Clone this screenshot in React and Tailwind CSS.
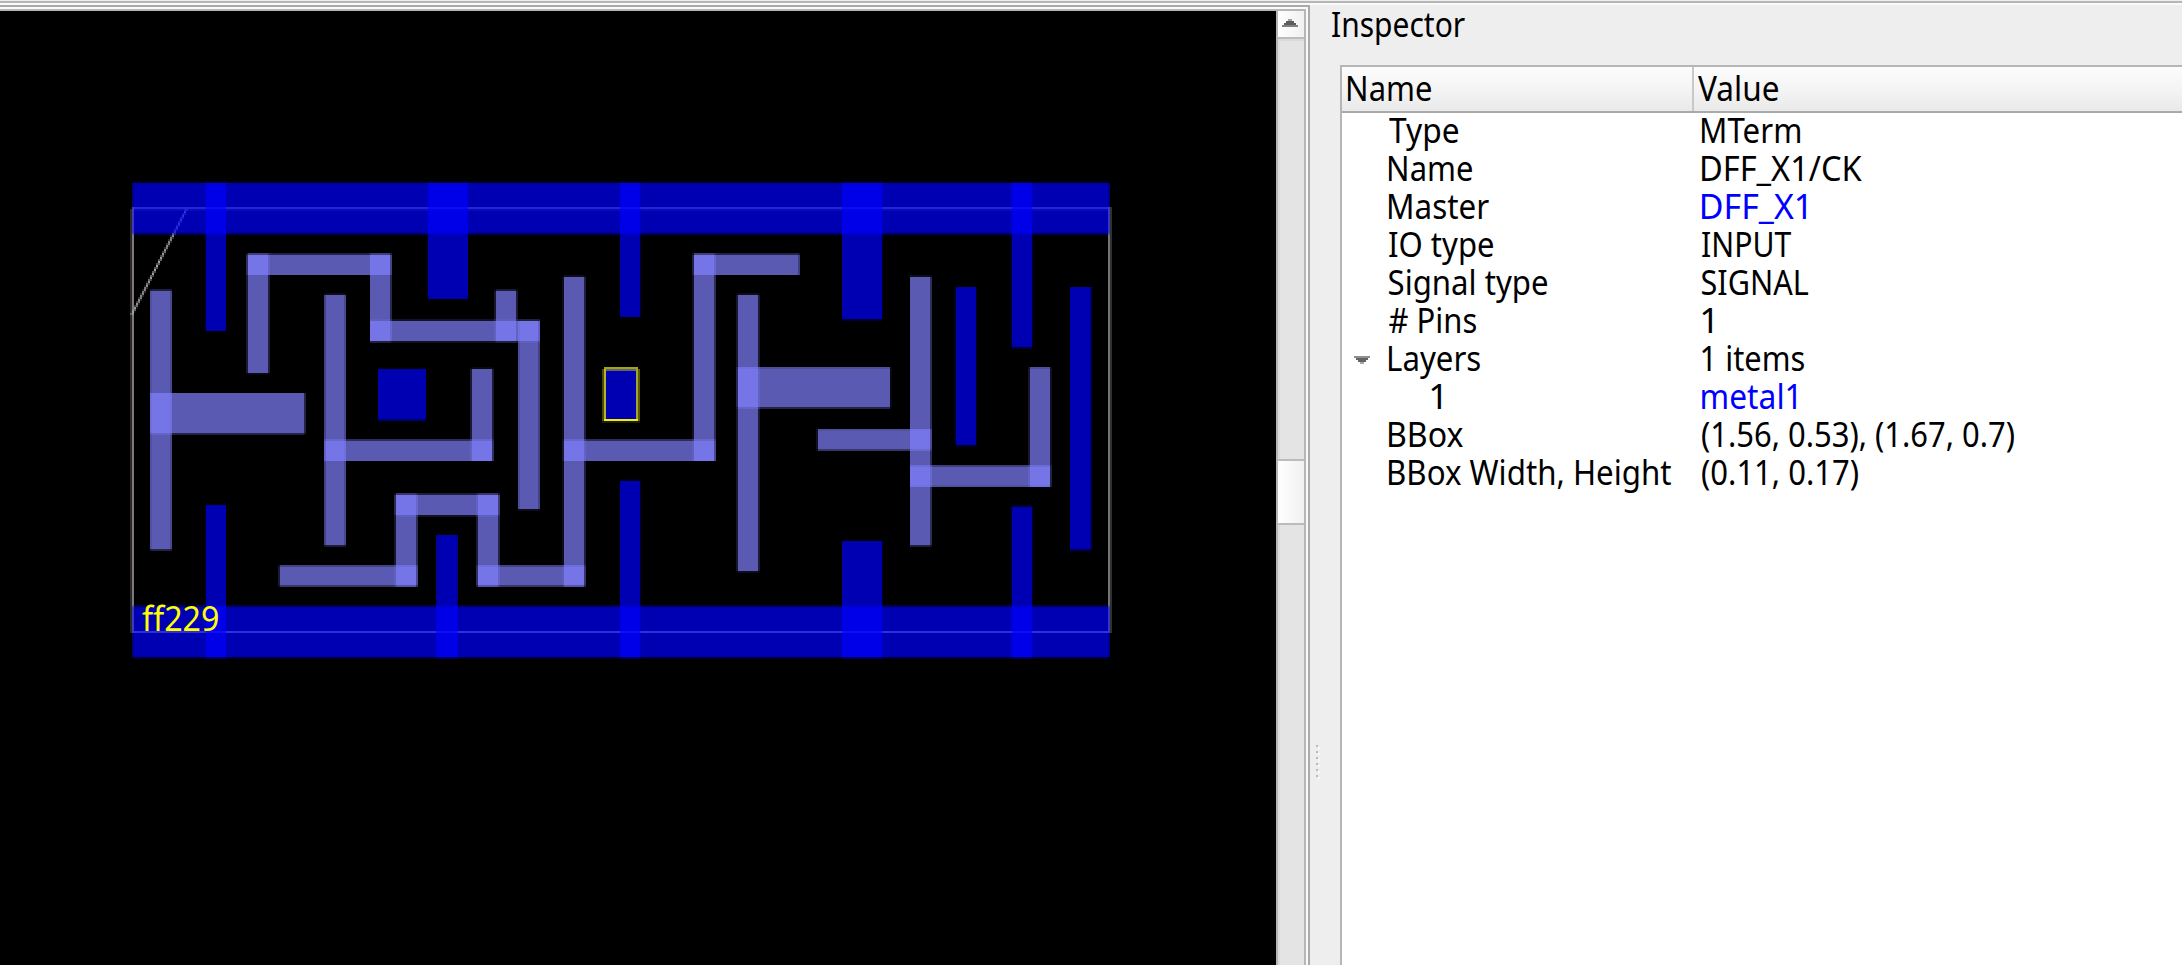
import React from 'react';

// Measured at ten times the drawn size, so that the ink box is precise.
const FONT = '340px "Noto Sans"';
let ctx;

function inkBox(text) {
  ctx = ctx || document.createElement('canvas').getContext('2d');
  ctx.font = FONT;
  const m = ctx.measureText(text);
  return {
    left: -m.actualBoundingBoxLeft / 10,
    width: (m.actualBoundingBoxLeft + m.actualBoundingBoxRight) / 10,
  };
}

// Text condensed horizontally so that its ink spans exactly `w` pixels.
function Label({ text, w, className = '' }) {
  const ink = inkBox(text);
  const s = w / ink.width;
  return (
    <span className={`block h-[38px] whitespace-nowrap ${className}`} style={{ width: w }}>
      <span
        className="block w-max origin-left text-[34px] leading-[38px]"
        style={{ transform: `translateX(${-ink.left * s}px) scaleX(${s})` }}
      >
        {text}
      </span>
    </span>
  );
}

// x0, y0, x1, y1 of each metal shape
const RAILS = [
  [132.5, 182.8, 1109.5, 234],
  [132.5, 606.1, 1109.5, 657.6],
  [205.7, 182.8, 226, 331],
  [427.8, 182.8, 468, 299],
  [619.9, 182.8, 640.3, 317],
  [842, 182.8, 882.3, 319.6],
  [1011.6, 182.8, 1032.3, 347.6],
  [955.6, 287, 976.2, 445.4],
  [1070, 287, 1091.2, 550],
  [378, 369, 426, 420.2],
  [604.6, 369, 637.4, 420.2],
  [205.7, 505, 226, 657.6],
  [436.3, 535, 457.7, 657.6],
  [619.9, 480.8, 640.3, 657.6],
  [842, 541, 882.3, 657.6],
  [1011.6, 506.4, 1032.3, 657.6],
];

const WIRES = [
  [150.2, 290.3, 171.6, 549.8],
  [150.2, 393, 304.8, 433.8],
  [247.4, 254.2, 268.7, 373.2],
  [247.4, 254.2, 390.9, 275],
  [370, 254.2, 390.9, 341.4],
  [370, 320.6, 539.5, 341.4],
  [495.5, 290.4, 516.6, 341.4],
  [518.3, 320.6, 539.5, 509.3],
  [563.7, 276.7, 584.7, 586.2],
  [563.7, 440, 715, 461],
  [693.6, 254.2, 715, 461],
  [693.6, 254.2, 799.4, 275],
  [737.5, 294.7, 758.6, 571.3],
  [737.5, 367.3, 890.2, 407.8],
  [324.5, 294.7, 345.6, 545.6],
  [324.5, 440, 492.6, 461],
  [471.4, 368.8, 492.6, 461],
  [395.5, 494.3, 417, 586.2],
  [395.5, 494.3, 498.8, 515.4],
  [477.4, 494.3, 498.8, 586.2],
  [279.4, 565.5, 417, 586.2],
  [477.4, 565.5, 584.7, 586.2],
  [910, 276.7, 931, 545.7],
  [817.6, 429.2, 931, 450.2],
  [910, 465.6, 1050.4, 486.8],
  [1029.5, 367.3, 1050.4, 486.8],
];

// Splits an interval on the two-pixel device grid into [start, end, coverage].
function spans(a, b, origin) {
  const up = origin + Math.ceil((a - origin) / 2 - 1e-6) * 2;
  const down = origin + Math.floor((b - origin) / 2 + 1e-6) * 2;
  const out = [];
  if (up - a > 0.01) out.push([up - 2, up, (up - a) / 2]);
  out.push([up, down, 1]);
  if (b - down > 0.01) out.push([down, down + 2, (b - down) / 2]);
  return out;
}

function Shape({ box, fill }) {
  const [x0, y0, x1, y1] = box;
  const xs = spans(x0, x1, 0);
  const ys = spans(y0, y1, 1);
  return (
    <g fill={fill}>
      {ys.map(([t, b, cy]) =>
        xs.map(([l, r, cx]) => (
          <rect key={`${l}-${t}`} x={l} y={t} width={r - l} height={b - t} fillOpacity={0.7 * cx * cy} />
        ))
      )}
    </g>
  );
}

function Corner() {
  const cells = [];
  for (let y = 209; y < 315; y += 2) {
    const x = 130.6 + ((314 - y) * 55) / 106;
    const l = Math.floor(x / 2) * 2;
    const f = (x - l) / 2;
    cells.push(<rect key={`a${y}`} x={l} y={y} width="2" height="2" fillOpacity={1 - f} />);
    cells.push(<rect key={`b${y}`} x={l + 2} y={y} width="2" height="2" fillOpacity={f} />);
  }
  return <g fill="#aaaaaa">{cells}</g>;
}

function Layout() {
  return (
    <svg className="block" width="1276" height="954" viewBox="0 11 1276 954" shapeRendering="crispEdges">
      <rect x="132" y="207" width="978" height="2" fill="#808080" />
      <rect x="132" y="209" width="978" height="2" fill="#242424" />
      <rect x="132" y="631" width="978" height="2" fill="#a0a0a0" />
      <rect x="130" y="209" width="2" height="424" fill="#2c2828" />
      <rect x="132" y="209" width="2" height="424" fill="#7c787c" />
      <rect x="1108" y="209" width="2" height="424" fill="#747474" />
      <rect x="1110" y="207" width="2" height="426" fill="#303030" />
      <Corner />
      {RAILS.map((b, i) => <Shape key={i} box={b} fill="#0000ff" />)}
      {WIRES.map((b, i) => <Shape key={i} box={b} fill="#8080ff" />)}
      <g>
        <rect x="602" y="369" width="2" height="52" fill="#4c4c00" />
        <rect x="604" y="367" width="34" height="2" fill="#a6a600" />
        <rect x="606" y="369" width="30" height="2" fill="#62627a" />
        <rect x="604" y="369" width="2" height="52" fill="#b4b428" />
        <rect x="636" y="369" width="2" height="52" fill="#a4a42c" />
        <rect x="638" y="369" width="2" height="52" fill="#5a5a00" />
        <rect x="604" y="419" width="34" height="2" fill="#eeee10" />
        <rect x="602" y="421" width="38" height="2" fill="#1c1c00" />
      </g>
    </svg>
  );
}

function ScrollBar() {
  return (
    <div className="flex w-[30px] shrink-0 flex-col border-x-2 border-[#b6b6b6]">
      <div className="flex h-[28px] border-b-2 border-[#bcbcbc] bg-linear-to-r from-white to-[#f0f0f0] pl-[4px] pt-[8px]">
        <svg width="16" height="8" viewBox="0 0 16 8" shapeRendering="crispEdges" fill="#5c5c5c">
          <rect x="6" y="0" width="4" height="2" fill="#a0a0a0" />
          <rect x="4" y="2" width="8" height="2" />
          <rect x="2" y="4" width="12" height="2" />
          <rect x="0" y="6" width="16" height="2" fill="#808080" />
        </svg>
      </div>
      <div className="h-[420px] border-l-2 border-t-2 border-[#dadada] bg-[#e4e4e4]" />
      <div className="h-[66px] border-y-2 border-[#bcbcbc] bg-linear-to-r from-white to-[#f0f0f0]" />
      <div className="flex-1 border-l-2 border-[#dadada] bg-[#e4e4e4]" />
    </div>
  );
}

const ROWS = [
  ['Type', 69, 'MTerm', 98],
  ['Name', 83, 'DFF_X1/CK', 160],
  ['Master', 100, 'DFF_X1', 104, true],
  ['IO type', 104, 'INPUT', 89],
  ['Signal type', 158, 'SIGNAL', 106],
  ['# Pins', 87, '1', 10],
  ['Layers', 91, '1 items', 102],
  ['1', 10, 'metal1', 94, true],
  ['BBox', 74, '(1.56, 0.53), (1.67, 0.7)', 312],
  ['BBox Width, Height', 282, '(0.11, 0.17)', 156],
];

function Row({ row, index }) {
  const [name, nameW, value, valueW, link] = row;
  return (
    <div className="flex h-[38px]">
      <div className="flex w-[47px] shrink-0 pl-[12px] pt-[17px]">
        {name === 'Layers' && (
          <svg width="16" height="8" viewBox="0 0 16 8" shapeRendering="crispEdges" fill="#646464">
            <rect x="0" y="0" width="16" height="2" fill="#909090" />
            <rect x="2" y="2" width="12" height="2" />
            <rect x="4" y="4" width="8" height="2" />
            <rect x="6" y="6" width="4" height="2" fill="#a8a8a8" />
          </svg>
        )}
      </div>
      <div className={`w-[313px] shrink-0 ${index === 7 ? 'pl-[42px]' : ''}`}>
        <Label text={name} w={nameW} />
      </div>
      <Label text={value} w={valueW} className={link ? 'text-[#0000ff]' : ''} />
    </div>
  );
}

function Inspector() {
  return (
    <div className="flex min-w-0 flex-1">
      <div className="flex w-[30px] shrink-0 flex-col gap-[4px] pl-[6px] pt-[740px]">
        {[0, 1, 2, 3, 4, 5].map((i) => (
          <div key={i} className="h-[2px] w-[2px] bg-[#bababa] shadow-[2px_2px_0_#f8f8f8]" />
        ))}
      </div>
      <div className="flex min-w-0 flex-1 flex-col">
        <div className="h-[60px]">
          <Label text="Inspector" w={133} className="-ml-[8px]" />
        </div>
        <div className="flex min-w-0 flex-1 flex-col border-l-2 border-t-2 border-[#b6b6b6] bg-white">
          <div className="flex h-[46px] border-b-2 border-[#aaaaaa] bg-linear-to-b from-[#fcfcfc] via-[#f4f4f4] to-[#e9e9e9]">
            <div className="w-[352px] shrink-0 border-r-2 border-[#c8c8c8] pl-[6px] pt-[2px]">
              <Label text="Name" w={83} />
            </div>
            <div className="pl-[4px] pt-[2px]">
              <Label text="Value" w={80} />
            </div>
          </div>
          <div className="-mt-[2px] flex flex-col">
            {ROWS.map((row, i) => <Row key={i} row={row} index={i} />)}
          </div>
        </div>
      </div>
    </div>
  );
}

export default function App() {
  return (
    <div className="flex h-[965px] w-[2182px] flex-col overflow-hidden bg-[#eeeeee] font-['Noto_Sans',sans-serif] text-black">
      <div className="mt-[1px] h-[4px] shrink-0 border-b-2 border-t-2 border-b-[#fafafa] border-t-[#b6b6b6]" />
      <div className="flex min-h-0 flex-1">
        <div className="flex w-[1310px] shrink-0 flex-col border-r-2 border-t-2 border-[#aaaaaa] bg-[#fafafa] pr-[2px] pt-[2px]">
          <div className="h-[2px] shrink-0 bg-[#b6b6b6]" />
          <div className="flex min-h-0 flex-1">
            <div className="relative w-[1276px] shrink-0 bg-black">
              <Layout />
              <div className="absolute left-[142px] top-[588px]">
                <Label text="ff229" w={76} className="text-[#ffff00]" />
              </div>
            </div>
            <ScrollBar />
          </div>
        </div>
        <Inspector />
      </div>
    </div>
  );
}
